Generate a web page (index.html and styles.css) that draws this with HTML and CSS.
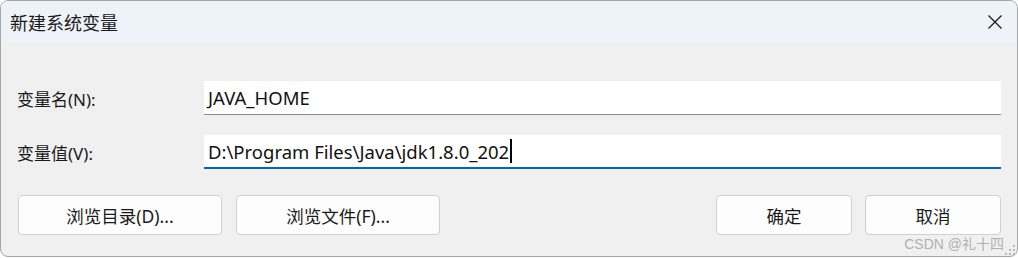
FILE: index.html
```html
<!DOCTYPE html>
<html lang="zh-CN">
<head>
<meta charset="utf-8">
<title>新建系统变量</title>
<link rel="stylesheet" href="styles.css">
</head>
<body>
<div class="window">
  <div class="titlebar">
    <span class="title">新建系统变量</span>
    <span class="close">
      <svg width="16" height="16" viewBox="0 0 16 16"><path d="M1.5 1.5 L14.5 14.5 M14.5 1.5 L1.5 14.5" stroke="#1b1b1b" stroke-width="1.3" fill="none"/></svg>
    </span>
  </div>
  <div class="content">
    <div class="row">
      <div class="label">变量名(N):</div>
      <div class="field">JAVA_HOME</div>
    </div>
    <div class="row">
      <div class="label">变量值(V):</div>
      <div class="field focused">D:\Program Files\Java\jdk1.8.0_202<span class="caret"></span></div>
    </div>
    <div class="buttons">
      <div class="group">
        <div class="btn wide">浏览目录(D)...</div>
        <div class="btn wide">浏览文件(F)...</div>
      </div>
      <div class="group right">
        <div class="btn">确定</div>
        <div class="btn">取消</div>
      </div>
    </div>
  </div>
  <div class="watermark">CSDN @礼十四</div>
  <div class="grip">
    <svg width="10" height="10" viewBox="0 0 10 10" fill="#b8b8b8">
      <rect x="8" y="0" width="2" height="2"/>
      <rect x="4" y="4" width="2" height="2"/><rect x="8" y="4" width="2" height="2"/>
      <rect x="0" y="8" width="2" height="2"/><rect x="4" y="8" width="2" height="2"/><rect x="8" y="8" width="2" height="2"/>
    </svg>
  </div>
</div>
</body>
</html>
```
FILE: styles.css
```css
html, body {
  margin: 0;
  padding: 0;
  background: #ffffff;
}
body {
  font-family: "Noto Sans", "Noto Sans CJK SC", sans-serif;
  color: #1a1a1a;
}
.window {
  position: relative;
  width: 1018px;
  height: 257px;
  box-sizing: border-box;
  border: 1px solid #a6a6a6;
  border-radius: 8px;
  overflow: hidden;
  background: #f0f0f0;
  display: flex;
  flex-direction: column;
}
.titlebar {
  height: 42px;
  background: #eef2f9;
  display: flex;
  align-items: center;
  justify-content: space-between;
  padding: 0 14px 0 9px;
}
.title {
  font-size: 18px;
  color: #1a1a1a;
}
.close {
  display: flex;
  align-items: center;
}
.content {
  flex: 1;
  padding: 38px 16px 0 16px;
  display: flex;
  flex-direction: column;
  gap: 20px;
}
.row {
  display: flex;
  align-items: center;
}
.label {
  width: 187px;
  font-size: 17px;
  color: #1a1a1a;
}
.field {
  flex: 1;
  height: 34px;
  box-sizing: border-box;
  background: #ffffff;
  border-bottom: 1px solid #8a8a8a;
  padding: 0 4px;
  font-size: 18.5px;
  color: #111;
  display: flex;
  align-items: center;
  white-space: pre;
}
.field.focused {
  border-bottom: 2px solid #0067c0;
}
.caret {
  display: inline-block;
  width: 2px;
  height: 24px;
  background: #000;
  margin-left: 1px;
}
.buttons {
  margin-top: 6px;
  display: flex;
  justify-content: space-between;
  padding-left: 1px;
}
.group {
  display: flex;
  gap: 14px;
}
.group.right {
  gap: 13px;
}
.btn {
  width: 136px;
  height: 40px;
  box-sizing: border-box;
  border: 1px solid #d0d0d0;
  border-radius: 4px;
  background: #fdfdfd;
  font-size: 17.5px;
  display: flex;
  align-items: center;
  justify-content: center;
  color: #1a1a1a;
}
.btn.wide {
  width: 204px;
}
.watermark {
  position: absolute;
  right: 13px;
  bottom: 3px;
  font-family: "Liberation Sans", "Noto Sans CJK SC", sans-serif;
  font-size: 14px;
  color: #b0b0b0;
}
.grip {
  position: absolute;
  right: 2px;
  bottom: 1px;
  line-height: 0;
}
```
